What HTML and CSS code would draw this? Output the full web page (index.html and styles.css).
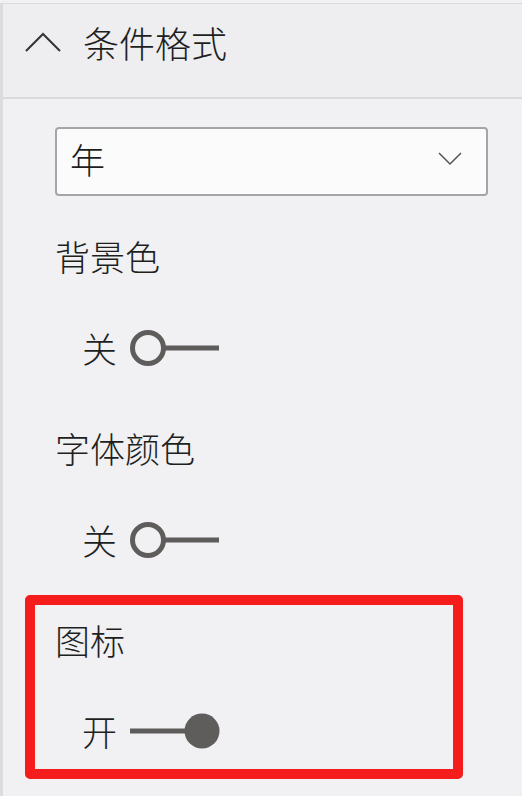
FILE: index.html
```html
<!DOCTYPE html>
<html lang="zh-CN">
<head>
    <meta charset="UTF-8">
    <meta name="viewport" content="width=device-width, initial-scale=1.0">
    <title>条件格式</title>
    <link rel="stylesheet" href="styles.css">
</head>
<body>
    <div class="panel">
        <!-- 卡片标题 -->
        <div class="card-header">
            <svg class="chevron-up" width="36" height="20" viewBox="0 0 36 20">
                <path d="M1 19 L18 2 L35 19" fill="none" stroke="#333" stroke-width="2"/>
            </svg>
            <span class="card-title">条件格式</span>
        </div>

        <div class="card-body">
            <!-- 字段下拉框 -->
            <div class="dropdown">
                <span class="dropdown-value">年</span>
                <svg class="chevron-down" width="24" height="14" viewBox="0 0 24 14">
                    <path d="M1 1 L12 12 L23 1" fill="none" stroke="#555" stroke-width="1.5"/>
                </svg>
            </div>

            <div class="label">背景色</div>
            <div class="toggle-row">
                <span class="toggle-text">关</span>
                <svg class="toggle" width="92" height="40" viewBox="0 0 92 40">
                    <line x1="36" y1="20" x2="91" y2="20" stroke="#5f5d5c" stroke-width="5"/>
                    <circle cx="20" cy="20" r="15.5" fill="none" stroke="#5f5d5c" stroke-width="5"/>
                </svg>
            </div>

            <div class="label label-gap">字体颜色</div>
            <div class="toggle-row">
                <span class="toggle-text">关</span>
                <svg class="toggle" width="92" height="40" viewBox="0 0 92 40">
                    <line x1="36" y1="20" x2="91" y2="20" stroke="#5f5d5c" stroke-width="5"/>
                    <circle cx="20" cy="20" r="15.5" fill="none" stroke="#5f5d5c" stroke-width="5"/>
                </svg>
            </div>

            <!-- 红框标注部分 -->
            <div class="highlight">
                <div class="label">图标</div>
                <div class="toggle-row">
                    <span class="toggle-text">开</span>
                    <svg class="toggle" width="92" height="40" viewBox="0 0 92 40">
                        <line x1="2" y1="20" x2="62" y2="20" stroke="#5f5d5c" stroke-width="5"/>
                        <circle cx="74" cy="20" r="17.5" fill="#5f5d5c"/>
                    </svg>
                </div>
            </div>
        </div>
    </div>
</body>
</html>
```

FILE: styles.css
```css
/* 页面整体 */
body {
    margin: 0;
    padding-top: 3px;
    background-color: #f1f0f2;
    font-family: "Noto Sans CJK SC", "Noto Sans", sans-serif;
    font-weight: 300;
    color: #201f1e;
}

.panel {
    border-left: 3px solid #dcdbdd;
    min-height: 793px;
    box-sizing: border-box;
}

/* 标题栏 */
.card-header {
    display: flex;
    align-items: center;
    height: 96px;
    box-sizing: border-box;
    padding-left: 22px;
    padding-bottom: 18px;
    background-color: #eeedef;
    border-top: 1px solid #dad9db;
    border-bottom: 2px solid #dad9db;
}

.chevron-up {
    margin-right: 22px;
}

.card-title {
    font-size: 36px;
    line-height: 50px;
}

/* 内容区 */
.card-body {
    padding-left: 52px;
    padding-top: 28px;
}

.dropdown {
    display: flex;
    align-items: center;
    justify-content: space-between;
    width: 433px;
    height: 69px;
    box-sizing: border-box;
    padding: 0 24px 6px 13px;
    background-color: #fbfbfc;
    border: 2px solid #a5a4a6;
    border-radius: 4px;
}

.dropdown-value {
    font-size: 35px;
    line-height: 50px;
}

.label {
    font-size: 35px;
    line-height: 50px;
    height: 50px;
    margin-top: 35px;
}

.label-gap {
    margin-top: 50px;
}

.toggle-row {
    display: flex;
    align-items: center;
    height: 50px;
    margin-top: 42px;
    padding-left: 27px;
}

.toggle-text {
    font-size: 35px;
    line-height: 50px;
    margin-right: 11px;
}

/* 红色标注框 */
.highlight {
    margin-top: 30px;
    margin-left: -30px;
    width: 438px;
    height: 184px;
    box-sizing: border-box;
    padding-left: 20px;
    border: 10px solid #f41d1b;
    border-radius: 5px;
}

.highlight .label {
    margin-top: 10px;
}

.highlight .toggle-row {
    margin-top: 41px;
}
```
